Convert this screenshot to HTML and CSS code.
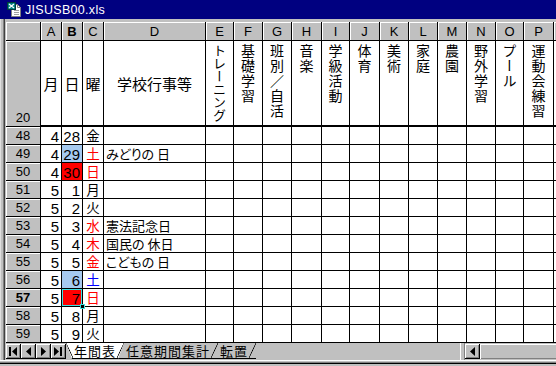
FILE: index.html
```html
<!DOCTYPE html>
<html lang="ja">
<head>
    <meta charset="UTF-8">
    <title>JISUSB00.xls</title>
    <link rel="stylesheet" href="styles.css">
</head>
<body>
    <div class="window">
        <div class="titlebar">
            <svg class="doc-icon" width="16" height="16" viewBox="0 0 16 16">
                <path d="M4.5 2.5h6l3 3v9h-9z" fill="#fff" stroke="#808080"/>
                <path d="M10.5 2.5v3h3" fill="none" stroke="#808080"/>
                <path d="M7 8.5h5M7 10.5h5M7 12.5h5" stroke="#a0a0a0"/>
                <rect x="0.5" y="0.5" width="8" height="7" fill="#008080" stroke="#003c3c"/>
                <path d="M2 2l5 4M7 2l-5 4" stroke="#fff" stroke-width="1.3"/>
            </svg>
            <span class="title">JISUSB00.xls</span>
        </div>

        <div class="frame">
            <div class="sheet" id="sheet">
                <div class="corner"></div>
                <div class="colhead">A</div>
                <div class="colhead selected">B</div>
                <div class="colhead">C</div>
                <div class="colhead">D</div>
                <div class="colhead">E</div>
                <div class="colhead">F</div>
                <div class="colhead">G</div>
                <div class="colhead">H</div>
                <div class="colhead">I</div>
                <div class="colhead">J</div>
                <div class="colhead">K</div>
                <div class="colhead">L</div>
                <div class="colhead">M</div>
                <div class="colhead">N</div>
                <div class="colhead">O</div>
                <div class="colhead">P</div>
                <div class="colhead last"></div>

                <div class="rowhead">20</div>
                <div class="cell head">月</div>
                <div class="cell head">日</div>
                <div class="cell head">曜</div>
                <div class="cell head">学校行事等</div>
                <div class="cell head vert"><span class="small">トレーニング</span></div>
                <div class="cell head vert"><span>基礎学習</span></div>
                <div class="cell head vert"><span>班別／自活</span></div>
                <div class="cell head vert"><span>音楽</span></div>
                <div class="cell head vert"><span>学級活動</span></div>
                <div class="cell head vert"><span>体育</span></div>
                <div class="cell head vert"><span>美術</span></div>
                <div class="cell head vert"><span>家庭</span></div>
                <div class="cell head vert"><span>農園</span></div>
                <div class="cell head vert"><span>野外学習</span></div>
                <div class="cell head vert"><span>プール</span></div>
                <div class="cell head vert"><span>運動会練習</span></div>
                <div class="cell head last"></div>
            </div>

            <div class="tabbar">
                <div class="navbtns">
                    <div class="navbtn">
                        <svg width="8" height="9" viewBox="0 0 8 9"><rect x="0" y="0" width="2" height="9"/><path d="M8 0v9L3 4.5z"/></svg>
                    </div>
                    <div class="navbtn">
                        <svg width="5" height="9" viewBox="0 0 5 9"><path d="M5 0v9L0 4.5z"/></svg>
                    </div>
                    <div class="navbtn">
                        <svg width="5" height="9" viewBox="0 0 5 9"><path d="M0 0v9L5 4.5z"/></svg>
                    </div>
                    <div class="navbtn">
                        <svg width="8" height="9" viewBox="0 0 8 9"><path d="M0 0v9L5 4.5z"/><rect x="6" y="0" width="2" height="9"/></svg>
                    </div>
                </div>
                <div class="tabs">
                    <div class="tab active">年間表</div>
                    <div class="tab">任意期間集計</div>
                    <div class="tab">転置</div>
                </div>
                <div class="hscroll">
                    <div class="split"></div>
                    <div class="navbtn">
                        <svg width="5" height="9" viewBox="0 0 5 9"><path d="M5 0v9L0 4.5z"/></svg>
                    </div>
                    <div class="track"></div>
                </div>
            </div>
        </div>
        <div class="bottom"></div>
    </div>

    <script>
        const rows = [
            { n: 48, m: 4, d: 28, w: '金' },
            { n: 49, m: 4, d: 29, w: '土', wc: 'red', dc: 'bg-blue', ev: 'みどりの 日' },
            { n: 50, m: 4, d: 30, w: '日', wc: 'red', dc: 'bg-red' },
            { n: 51, m: 5, d: 1, w: '月' },
            { n: 52, m: 5, d: 2, w: '火' },
            { n: 53, m: 5, d: 3, w: '水', wc: 'red', ev: '憲法記念日' },
            { n: 54, m: 5, d: 4, w: '木', wc: 'red', ev: '国民の 休日' },
            { n: 55, m: 5, d: 5, w: '金', wc: 'red', ev: 'こどもの 日' },
            { n: 56, m: 5, d: 6, w: '土', wc: 'blue', dc: 'bg-blue' },
            { n: 57, m: 5, d: 7, w: '日', wc: 'red', dc: 'bg-red active-cell', active: true },
            { n: 58, m: 5, d: 8, w: '月' },
            { n: 59, m: 5, d: 9, w: '火' }
        ];

        const sheet = document.getElementById("sheet");

        rows.forEach(r => {
            let html = `<div class="rowhead${r.active ? ' selected' : ''}">${r.n}</div>`;
            html += `<div class="cell num">${r.m}</div>`;
            html += `<div class="cell num ${r.dc || ''}">${r.d}</div>`;
            html += `<div class="cell day ${r.wc || ''}">${r.w}</div>`;
            html += `<div class="cell text">${r.ev || ''}</div>`;
            // 空欄 E〜P
            for (let i = 0; i < 12; i++) {
                html += '<div class="cell"></div>';
            }
            html += '<div class="cell last"></div>';
            sheet.insertAdjacentHTML("beforeend", html);
        });
    </script>
</body>
</html>
```

FILE: styles.css
```css
body {
    margin: 0;
    background: #c0c0c0;
    font-family: "Liberation Sans", Arial, sans-serif;
}
.window {
    width: 556px;
    height: 366px;
    overflow: hidden;
    background: #c0c0c0;
    display: flex;
    flex-direction: column;
}
.titlebar {
    height: 19px;
    flex-shrink: 0;
    background: #000080;
    color: #fff;
    display: flex;
    align-items: center;
    gap: 2px;
    padding-left: 7px;
}
.doc-icon {
    margin-top: 1px;
}
.title {
    font-size: 12.5px;
    letter-spacing: 0.3px;
}
.frame {
    display: flex;
    flex-direction: column;
    padding: 3px 0 0 6px;
    box-shadow: inset 1px 0 0 #dfdfdf, inset 3px 0 0 #c0c0c0, inset 4px 0 0 #808080, inset 5px 0 0 #404040;
}

/* シート */
.sheet {
    display: grid;
    grid-template-columns: 35px 21px 21px 21px 102px 28px 29px 29px 30px 28px 30px 29px 29px 29px 29px 28px 30px 1fr;
    grid-template-rows: 19px 86px repeat(12, 18px);
    background: #fff;
}
.corner, .colhead, .rowhead {
    background: #c0c0c0;
    border-right: 1px solid #000;
    border-bottom: 1px solid #000;
    box-shadow: inset 1px 1px 0 #fff;
    font-size: 13px;
    color: #000;
}
.colhead {
    display: flex;
    align-items: center;
    justify-content: center;
    padding-top: 1px;
}
.rowhead {
    display: flex;
    align-items: flex-end;
    justify-content: center;
    line-height: 17px;
}
.selected {
    font-weight: bold;
}
.colhead.last, .cell.last {
    border-right: none;
}

.cell {
    border-right: 1px solid #000;
    border-bottom: 1px solid #000;
    display: flex;
    align-items: center;
    white-space: nowrap;
    overflow: hidden;
    font-family: "Noto Sans CJK JP", sans-serif;
    font-size: 14px;
    line-height: 17px;
    position: relative;
}
.cell.head {
    border-bottom-width: 2px;
    justify-content: center;
    font-size: 15px;
}
.cell.vert {
    align-items: flex-start;
    padding-top: 3px;
}
.cell.vert span {
    writing-mode: vertical-rl;
    text-orientation: upright;
    font-size: 14px;
    line-height: 1;
    letter-spacing: 1px;
}
.cell.vert span.small {
    font-size: 13px;
    letter-spacing: 0;
}
.cell.num {
    justify-content: flex-end;
    padding-right: 2px;
    padding-top: 1px;
    font-family: "Liberation Sans", Arial, sans-serif;
    font-size: 15px;
}
.cell.day {
    justify-content: center;
    overflow: visible;
    font-size: 13.5px;
}
.cell.text {
    padding-left: 2px;
    font-size: 13px;
    font-feature-settings: "palt";
}

.red { color: #f00; }
.blue { color: #00f; }
.bg-blue { background: #a6caf0; }
.bg-red { background: #f00; }

.active-cell {
    overflow: visible;
}
.active-cell::after {
    content: "";
    position: absolute;
    inset: -1px -1px -1px -1px;
    border: 1px solid #000;
    box-shadow: inset 0 0 0 1px #40e0e0;
}
.active-cell::before {
    content: "";
    position: absolute;
    right: -3px;
    bottom: -3px;
    width: 3px;
    height: 3px;
    background: #000;
    border: 1px solid #40e0e0;
    z-index: 2;
}

/* シート見出し */
.tabbar {
    height: 17px;
    display: flex;
    align-items: flex-start;
}
.navbtns {
    display: flex;
    padding-top: 1px;
}
.navbtn {
    width: 15px;
    height: 15px;
    display: flex;
    align-items: center;
    justify-content: center;
    background: #c0c0c0;
    box-shadow: inset -1px -1px 0 #000, inset 1px 1px 0 #fff, inset -2px -2px 0 #808080;
}
.navbtn svg {
    fill: #000;
    margin: -1px 0 0 -1px;
}
.tabs {
    display: flex;
    font-family: "Noto Sans CJK JP", sans-serif;
    font-size: 13px;
    letter-spacing: 1px;
}
.tab {
    height: 15px;
    line-height: 15px;
    padding: 0 8px 0 9px;
    margin-left: -7px;
    border-bottom: 1px solid #000;
    background: linear-gradient(to bottom right, transparent calc(50% - 0.7px), #000 50%, transparent calc(50% + 0.7px)) right / 7px 100% no-repeat;
}
.tab.active {
    margin-left: 0;
    padding-left: 8px;
    position: relative;
    z-index: 1;
    background:
        linear-gradient(to top right, transparent calc(50% - 0.7px), #000 50%, transparent calc(50% + 0.7px)) left / 7px 100% no-repeat,
        linear-gradient(to bottom right, transparent calc(50% - 0.7px), #000 50%, transparent calc(50% + 0.7px)) right / 7px 100% no-repeat,
        #fff;
    clip-path: polygon(0 0, 100% 0, calc(100% - 6px) 100%, 6px 100%);
}
.hscroll {
    margin-left: auto;
    width: 96px;
    height: 17px;
    display: flex;
}
.split {
    width: 5px;
    box-shadow: inset 1px 0 0 #fff, inset -1px 0 0 #808080;
}
.hscroll .navbtn {
    margin-top: 1px;
}
.track {
    flex: 1;
    margin-top: 1px;
    height: 15px;
    background: #c0c0c0;
    box-shadow: inset 1px 1px 0 #fff, inset 0 -1px 0 #808080;
}
.bottom {
    height: 6px;
    box-shadow: inset 0 1px 0 #fff, inset 0 -2px 0 #c0c0c0, inset 0 -3px 0 #000, inset 0 -4px 0 #808080;
}
```
